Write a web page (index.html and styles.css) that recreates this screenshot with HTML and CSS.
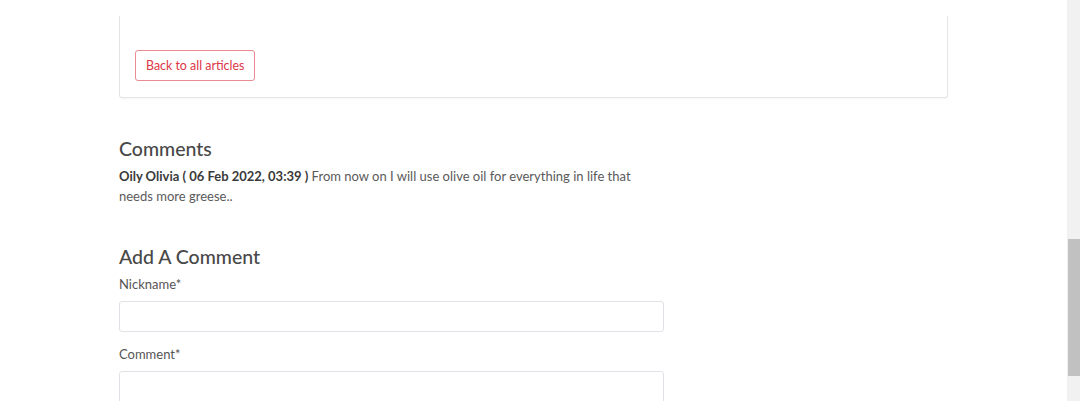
FILE: index.html
```html
<!DOCTYPE html>
<html lang="en">
<head>
<meta charset="utf-8">
<title>Article comments</title>
<link rel="stylesheet" href="styles.css">
</head>
<body>
<main class="container">
  <section class="article-card">
    <a class="btn-outline" href="#">Back to all articles</a>
  </section>

  <section class="comments">
    <h3 class="section-title">Comments</h3>
    <p class="comment"><strong>Oily Olivia ( 06 Feb 2022, 03:39 )</strong> From now on I will use olive oil for everything in life that needs more greese..</p>
  </section>

  <section class="add-comment">
    <h3 class="section-title">Add A Comment</h3>
    <form class="comment-form">
      <label class="field-label" for="nick">Nickname*</label>
      <input class="field-input" id="nick" type="text">
      <label class="field-label" for="body">Comment*</label>
      <textarea class="field-input field-area" id="body"></textarea>
    </form>
  </section>
</main>
<div class="scrollbar"><div class="scrollbar-thumb"></div></div>
</body>
</html>
```
FILE: styles.css
```css
html, body {
  margin: 0;
  padding: 0;
  background: #fff;
  overflow: hidden;
}
body {
  font-family: "Lato", "Open Sans", sans-serif;
  color: #555;
  padding-right: 13px;
}
.container {
  width: 829px;
  margin: 0 auto;
}
.article-card {
  margin-top: 16px;
  border: 1px solid #e5e5e5;
  border-top: none;
  border-radius: 0 0 3px 3px;
  box-shadow: 0 1px 2px rgba(0,0,0,0.04);
  padding: 34px 15px 16px;
}
.btn-outline {
  display: inline-block;
  box-sizing: border-box;
  height: 31px;
  line-height: 29px;
  padding: 0 10px;
  font-size: 12.4px;
  color: #dc3545;
  text-decoration: none;
  border: 1px solid #ea8a93;
  border-radius: 3px;
}
.comments {
  margin-top: 39px;
}
.section-title {
  margin: 0;
  font-size: 19.5px;
  font-weight: 500;
  line-height: 24px;
  color: #484848;
}
.comment {
  margin: 5px 0 0;
  width: 545px;
  font-size: 13px;
  line-height: 20px;
  color: #5a5a5a;
}
.comment strong {
  color: #3a3a3a;
  font-weight: 700;
}
.add-comment {
  margin-top: 39px;
}
.comment-form {
  display: flex;
  flex-direction: column;
  width: 545px;
  margin-top: 5px;
}
.field-label {
  font-size: 13px;
  line-height: 20px;
  color: #555;
}
.field-input {
  box-sizing: border-box;
  height: 31px;
  margin: 7px 0 12px;
  border: 1px solid #dfe2e6;
  border-radius: 3px;
  background: #fff;
  font: inherit;
}
.field-area {
  height: 60px;
  resize: none;
}
.scrollbar {
  position: fixed;
  top: 0;
  right: 0;
  width: 13px;
  height: 100%;
  background: #f1f1f1;
}
.scrollbar-thumb {
  position: absolute;
  top: 239px;
  left: 1px;
  right: 0;
  height: 137px;
  background: #c1c1c1;
}
```
